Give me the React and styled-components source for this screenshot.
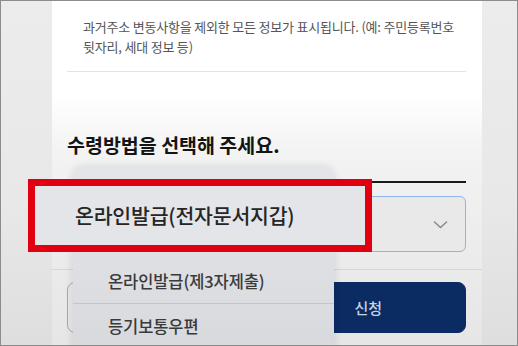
import React from 'react'
import styled, { createGlobalStyle } from 'styled-components'

const GlobalStyle = createGlobalStyle`
  html, body {
    margin: 0;
    padding: 0;
    width: 518px;
    height: 346px;
    overflow: hidden;
    background: #ececec;
  }
  * {
    box-sizing: border-box;
  }
`

const Frame = styled.div`
  position: relative;
  display: flex;
  width: 518px;
  height: 346px;
  padding-left: 51px;
  border: 1px solid #8c8c8c;
  background: linear-gradient(180deg, #ececec 0%, #e8e8e8 60%, #dedede 100%);
  overflow: hidden;
  font-family: 'Noto Sans CJK KR', 'Noto Sans', sans-serif;
`

const Page = styled.div`
  display: flex;
  flex-direction: column;
  width: 430px;
  padding: 0 16px 0 15px;
  background: linear-gradient(
    180deg,
    #ffffff 0px,
    #ffffff 95px,
    #f3f3f3 150px,
    #ebebeb 260px,
    #e6e6e6 100%
  );
`

const Notice = styled.p`
  margin: 16px 0 0;
  padding-left: 16px;
  font-size: 13px;
  line-height: 20px;
  letter-spacing: -0.2px;
  color: #555;
  white-space: nowrap;
`

const Divider = styled.div`
  height: 1px;
  margin-top: ${p => p.top}px;
  margin-left: ${p => (p.full ? '-15px' : '0')};
  margin-right: ${p => (p.full ? '-16px' : '0')};
  background: ${p => p.color || '#e3e3e3'};
`

const Heading = styled.h2`
  margin: 61px 0 0;
  font-size: 19.5px;
  line-height: 24px;
  font-weight: 700;
  letter-spacing: 0;
  color: #141414;
`

const Underline = styled.div`
  height: 2px;
  margin-top: 24px;
  background: #1a1a1a;
`

const SelectBox = styled.div`
  display: flex;
  align-items: center;
  justify-content: flex-end;
  height: 56px;
  margin-top: 13px;
  padding-right: 17px;
  border: 1.5px solid #8db5e8;
  border-radius: 6px;
  background: #e9e9e9;
`

const ButtonRow = styled.div`
  display: flex;
  gap: 8px;
  height: 51px;
  margin-top: 12px;
`

const Button = styled.button`
  flex: 1;
  display: flex;
  align-items: center;
  justify-content: center;
  border-radius: 8px;
  border: 1px solid ${p => (p.primary ? '#0b2b63' : '#a9a9a9')};
  background: ${p => (p.primary ? '#0b2b63' : 'transparent')};
  color: ${p => (p.primary ? '#c9d1e1' : '#333')};
  font-family: inherit;
  font-size: 15px;
  font-weight: 500;
`

const Menu = styled.div`
  position: absolute;
  left: 72px;
  top: 164px;
  width: 261px;
  height: 200px;
  display: flex;
  flex-direction: column;
  border-radius: 10px;
  background: linear-gradient(180deg, #e3e5e8 0%, #dcdee2 60%, #d6d8dc 100%);
  box-shadow: 0 2px 10px rgba(0, 0, 0, 0.12);
`

const MenuItem = styled.div`
  display: flex;
  align-items: center;
  height: ${p => p.h}px;
  padding-left: 35px;
  border-top: ${p => (p.line ? '1px solid #c4c6ca' : 'none')};
  font-size: 16.5px;
  font-weight: 500;
  letter-spacing: -0.1px;
  color: #3a3a3a;
`

const Callout = styled.div`
  position: absolute;
  left: 27px;
  top: 178px;
  width: 344px;
  height: 73px;
  display: flex;
  align-items: center;
  padding-left: 40px;
  padding-bottom: 1px;
  border: 7px solid #e10010;
  background: #e3e5e8;
  font-size: 20.5px;
  font-weight: 500;
  letter-spacing: -0.2px;
  color: #262626;
`

const Chevron = () => (
  <svg width="15" height="9" viewBox="0 0 15 9" fill="none">
    <path d="M1 1.5l6.5 6 6.5-6" stroke="#8a8a8a" strokeWidth="1.5" />
  </svg>
)

const App = () => {
  return (
    <>
      <GlobalStyle />
      <Frame>
        <Page>
          <Notice>
            과거주소 변동사항을 제외한 모든 정보가 표시됩니다. (예: 주민등록번호
            <br />
            뒷자리, 세대 정보 등)
          </Notice>
          <Divider top={14} />
          <Heading>수령방법을 선택해 주세요.</Heading>
          <Underline />
          <SelectBox>
            <Chevron />
          </SelectBox>
          <Divider full top={17} color="#d6d6d6" />
          <ButtonRow>
            <Button aria-label="취소" />
            <Button primary>신청</Button>
          </ButtonRow>
        </Page>
        <Menu>
          <MenuItem h={94} />
          <MenuItem h={44}>온라인발급(제3자제출)</MenuItem>
          <MenuItem h={44} line>
            등기보통우편
          </MenuItem>
        </Menu>
        <Callout>온라인발급(전자문서지갑)</Callout>
      </Frame>
    </>
  )
}

export default App
